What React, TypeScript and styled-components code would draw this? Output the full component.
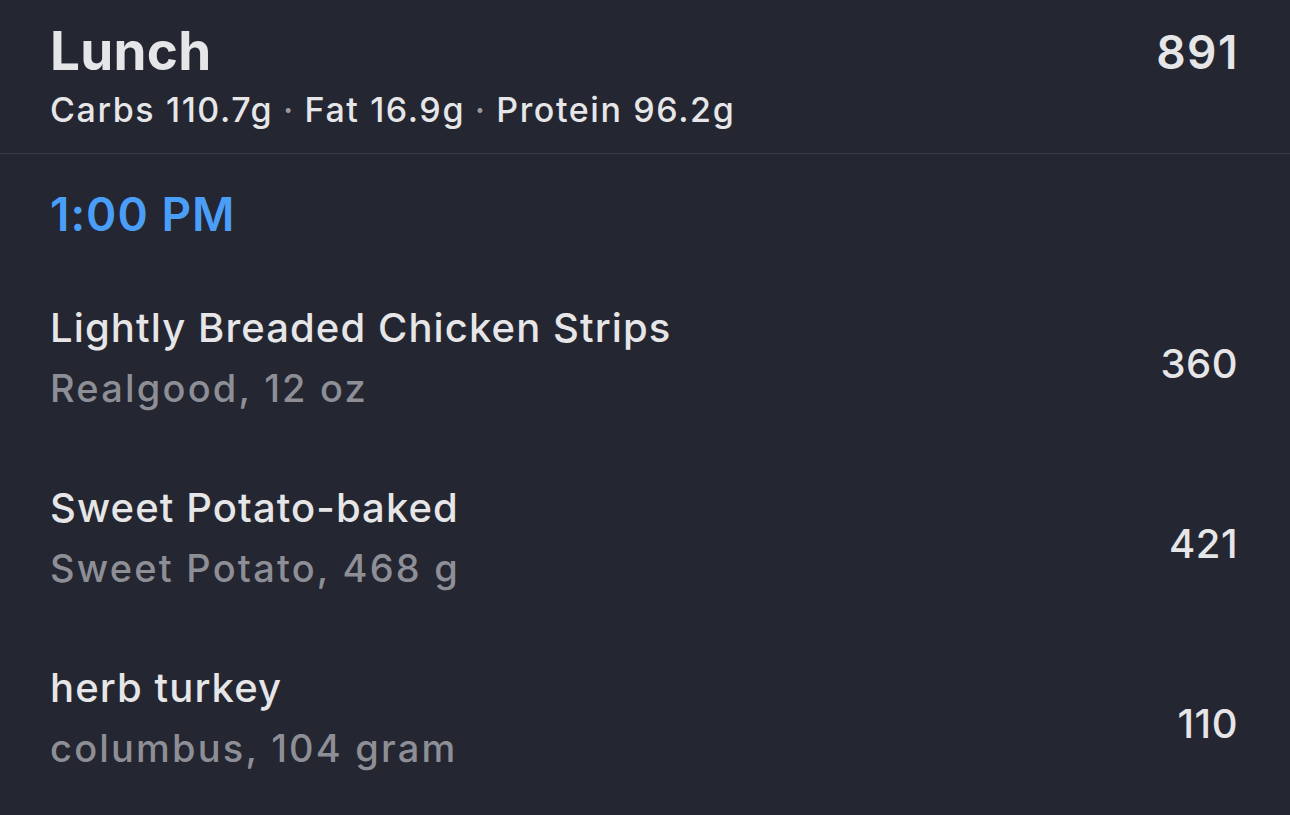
import React from 'react';
import styled, { createGlobalStyle } from 'styled-components';

const GlobalStyle = createGlobalStyle`
  html, body {
    margin: 0;
    padding: 0;
    background: #242631;
  }
  body {
    font-family: Inter, "Noto Sans", "Liberation Sans", sans-serif;
    color: #e6e6e8;
    -webkit-font-smoothing: antialiased;
  }
`;

const Screen = styled.div`
  width: 1290px;
  height: 815px;
  background: #242631;
  overflow: hidden;
`;

const Header = styled.header`
  display: flex;
  justify-content: space-between;
  align-items: flex-start;
  padding: 25px 52px 26px 50px;
  border-bottom: 1px solid #393b46;
`;

const TitleBlock = styled.div`
  display: flex;
  flex-direction: column;
  gap: 15px;
`;

const Title = styled.h1`
  margin: 0;
  font-size: 53px;
  line-height: 53px;
  font-weight: 700;
  letter-spacing: 0.3px;
`;

const Macros = styled.div`
  font-size: 34px;
  line-height: 34px;
  font-weight: 500;
  letter-spacing: 1.6px;
`;

const Dot = styled.span`
  color: #9a9ba2;
  margin: 0 -1px;
`;

const Total = styled.div`
  margin-top: 4px;
  margin-right: -1px;
  font-size: 46px;
  line-height: 46px;
  font-weight: 600;
  letter-spacing: 1.5px;
`;

const Section = styled.section`
  padding: 37px 52px 0 50px;
`;

const Time = styled.div`
  font-size: 46px;
  line-height: 46px;
  font-weight: 600;
  color: #4a9ef7;
  letter-spacing: 1px;
  margin-bottom: 31px;
`;

const Row = styled.div`
  display: flex;
  justify-content: space-between;
  align-items: center;
  height: 180px;
`;

const Info = styled.div`
  display: flex;
  flex-direction: column;
  gap: 10px;
`;

const Name = styled.div`
  font-size: 40px;
  line-height: 50px;
  font-weight: 500;
  letter-spacing: 1.1px;
`;

const Detail = styled.div`
  font-size: 38px;
  line-height: 50px;
  font-weight: 500;
  letter-spacing: 2.2px;
  color: #8e8f96;
`;

const Calories = styled.div`
  margin-top: 12px;
  font-size: 40px;
  line-height: 40px;
  font-weight: 500;
  letter-spacing: 0.5px;
`;

const foods = [
  { name: 'Lightly Breaded Chicken Strips', detail: 'Realgood, 12 oz', kcal: 360 },
  { name: 'Sweet Potato-baked', detail: 'Sweet Potato, 468 g', kcal: 421 },
  { name: 'herb turkey', detail: 'columbus, 104 gram', kcal: 110 },
];

export default function App() {
  return (
    <Screen>
      <GlobalStyle />
      <Header>
        <TitleBlock>
          <Title>Lunch</Title>
          <Macros>
            Carbs 110.7g <Dot>·</Dot> Fat 16.9g <Dot>·</Dot> Protein 96.2g
          </Macros>
        </TitleBlock>
        <Total>891</Total>
      </Header>
      <Section>
        <Time>1:00 PM</Time>
        {foods.map((f) => (
          <Row key={f.name}>
            <Info>
              <Name>{f.name}</Name>
              <Detail>{f.detail}</Detail>
            </Info>
            <Calories>{f.kcal}</Calories>
          </Row>
        ))}
      </Section>
    </Screen>
  );
}
